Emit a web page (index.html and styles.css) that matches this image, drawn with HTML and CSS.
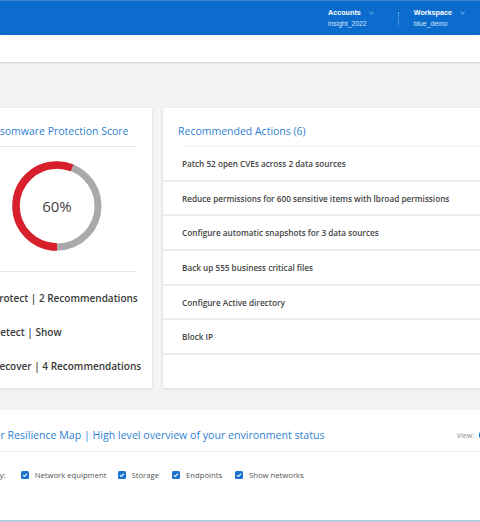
FILE: index.html
```html
<!DOCTYPE html>
<html lang="en">
<head>
    <meta charset="UTF-8">
    <meta name="viewport" content="width=device-width, initial-scale=1.0">
    <title>Cyber Resilience Dashboard</title>
    <link rel="stylesheet" href="styles.css">
</head>
<body>
    <header class="topbar">
        <div class="top-group top-group-first">
            <div class="top-label">Accounts
                <svg class="chevron" viewBox="0 0 6 4"><path d="M0.6 0.8 L3 3.1 L5.4 0.8" /></svg>
            </div>
            <div class="top-value">insight_2022</div>
        </div>
        <div class="top-divider"></div>
        <div class="top-group top-group-last">
            <div class="top-label">Workspace
                <svg class="chevron" viewBox="0 0 6 4"><path d="M0.6 0.8 L3 3.1 L5.4 0.8" /></svg>
            </div>
            <div class="top-value">blue_demo</div>
        </div>
    </header>
    <div class="subbar"></div>

    <main class="content">
        <div class="page">
            <div class="cards">
                <section class="card score-card">
                    <h2 class="card-title">Ransomware Protection Score</h2>
                    <div class="card-divider"></div>
                    <div class="donut-wrap">
                        <div class="donut">
                            <svg viewBox="0 0 90 90" width="90" height="90">
                                <circle cx="45" cy="45" r="41" fill="none" stroke="#a9a9a9" stroke-width="7" />
                                <circle cx="45" cy="45" r="41" fill="none" stroke="#d8202c" stroke-width="7.5"
                                        stroke-dasharray="144 300" transform="rotate(90 45 45)" />
                            </svg>
                            <span class="donut-value">60%</span>
                        </div>
                    </div>
                    <div class="card-divider"></div>
                    <ul class="score-list">
                        <li>Protect | 2 Recommendations</li>
                        <li>Detect | Show</li>
                        <li>Recover | 4 Recommendations</li>
                    </ul>
                </section>

                <section class="card actions-card">
                    <h2 class="card-title">Recommended Actions (6)</h2>
                    <div class="card-divider light"></div>
                    <ul class="action-list">
                        <li>Patch 52 open CVEs across 2 data sources</li>
                        <li>Reduce permissions for 600 sensitive items with lbroad permissions</li>
                        <li>Configure automatic snapshots for 3 data sources</li>
                        <li>Back up 555 business critical files</li>
                        <li>Configure Active directory</li>
                        <li>Block IP</li>
                    </ul>
                </section>
            </div>

            <section class="card map-card">
                <div class="map-head">
                    <h2 class="card-title">Cyber Resilience Map | High level overview of your environment status</h2>
                    <div class="view-switch">
                        <span>View:</span>
                        <span class="view-dot"></span>
                    </div>
                </div>
                <div class="filters">
                    <span class="filter-label">Filter by:</span>
                    <label class="check"><span class="box"><svg viewBox="0 0 8 8"><path d="M2 4.2 L3.4 5.5 L6 2.6" /></svg></span>Network equipment</label>
                    <label class="check"><span class="box"><svg viewBox="0 0 8 8"><path d="M2 4.2 L3.4 5.5 L6 2.6" /></svg></span>Storage</label>
                    <label class="check wide"><span class="box"><svg viewBox="0 0 8 8"><path d="M2 4.2 L3.4 5.5 L6 2.6" /></svg></span>Endpoints</label>
                    <label class="check wide"><span class="box"><svg viewBox="0 0 8 8"><path d="M2 4.2 L3.4 5.5 L6 2.6" /></svg></span>Show networks</label>
                </div>
                <div class="map-area"></div>
            </section>
        </div>
    </main>
</body>
</html>
```

FILE: styles.css
```css
html, body {
    margin: 0;
    padding: 0;
    overflow: hidden;
}
body {
    font-family: "Open Sans", Arial, sans-serif;
    background-color: #f4f4f4;
    color: #333;
}
.topbar {
    height: 34px;
    background-color: #0b6cce;
    border-top: 1px solid #3f8ad8;
    display: flex;
    justify-content: flex-end;
    align-items: flex-start;
    padding-right: 15px;
    font-family: "Liberation Sans", Arial, sans-serif;
    color: white;
}
.top-group {
    padding-top: 7px;
}
.top-group-first {
    margin-right: 24px;
}
.top-group-last {
    margin-left: 15px;
}
.top-label {
    font-size: 7.2px;
    font-weight: bold;
    line-height: 10px;
    display: flex;
    align-items: center;
    gap: 8px;
}
.chevron {
    width: 5px;
    height: 4px;
    fill: none;
    stroke: #d8e6f6;
    stroke-width: 0.9;
}
.top-value {
    font-size: 6.8px;
    line-height: 10px;
    margin-top: 1px;
    color: #d4e4f6;
}
.top-divider {
    margin-top: 11px;
    height: 14px;
    border-left: 1px dotted rgba(255, 255, 255, 0.45);
}
.subbar {
    height: 27px;
    background: white;
    box-shadow: 0 1px 2px rgba(0, 0, 0, 0.16);
    position: relative;
}
.content {
    padding-top: 46px;
}
.page {
    width: 534px;
    margin-left: -34px;
}
.cards {
    display: grid;
    grid-template-columns: 186px 1fr;
    gap: 11px;
}
.card {
    background: white;
    box-shadow: 0 1px 3px rgba(0, 0, 0, 0.12);
}
.card-title {
    margin: 0;
    font-size: 10.5px;
    font-weight: normal;
    line-height: 14px;
    color: #2f7fd3;
    padding: 16px 15px 8px;
}
.card-divider {
    height: 1px;
    margin: 0 15px;
    background: #e6e6e6;
}
.card-divider.light {
    margin-left: 18px;
    background: #f0f0f0;
}
.donut-wrap {
    display: flex;
    justify-content: center;
    padding: 14px 0 20px;
    margin-left: -4px;
}
.donut {
    display: grid;
    place-items: center;
}
.donut svg, .donut-value {
    grid-area: 1 / 1;
}
.donut-value {
    font-size: 15px;
    color: #444;
}
.score-list {
    list-style: none;
    margin: 0;
    padding: 9px 0 5px 27px;
}
.score-list li {
    font-size: 10px;
    font-weight: 600;
    line-height: 34px;
    color: #3a3a3a;
    white-space: nowrap;
}
.action-list {
    list-style: none;
    margin: 0;
    padding: 0;
}
.action-list li {
    height: 30.7px;
    line-height: 30.7px;
    padding: 2px 0 0 19px;
    font-size: 8.2px;
    font-weight: 600;
    color: #444;
    border-bottom: 2px solid #ececec;
    white-space: nowrap;
}
.map-card {
    margin-top: 22px;
}
.map-head {
    display: flex;
    justify-content: space-between;
    align-items: center;
    padding-right: 9px;
    border-bottom: 1px solid #ececec;
}
.map-head .card-title {
    font-size: 10.6px;
    padding: 18px 10px 9px;
}
.view-switch {
    display: flex;
    align-items: center;
    gap: 5px;
    font-size: 7px;
    color: #888;
    padding-top: 9px;
}
.view-dot {
    width: 12px;
    height: 12px;
    border-radius: 50%;
    background: #0b6cce;
}
.filters {
    display: flex;
    align-items: center;
    padding: 15px 0 0 0;
    margin-left: 9px;
    font-size: 7.7px;
    line-height: 16px;
    color: #555;
    gap: 11px;
}
.filter-label {
    margin-right: 4px;
}
.check {
    display: flex;
    align-items: center;
    gap: 6px;
}
.check.wide {
    margin-left: 2px;
}
.box {
    width: 8px;
    height: 8px;
    border-radius: 1.5px;
    background: #1a6fd0;
    display: flex;
}
.box svg {
    width: 8px;
    height: 8px;
    fill: none;
    stroke: white;
    stroke-width: 1.1;
}
.map-area {
    margin-top: 37px;
    height: 20px;
    border-top: 2px solid #b7cbe6;
}
```
